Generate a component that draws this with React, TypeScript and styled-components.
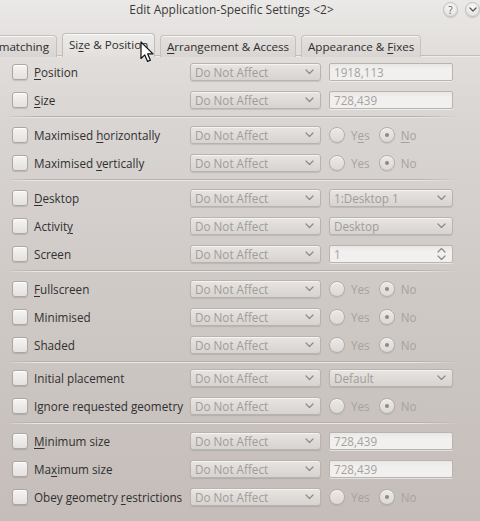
import React from 'react';
import styled, { createGlobalStyle } from 'styled-components';

const GlobalStyle = createGlobalStyle`
  html, body { margin: 0; padding: 0; }
  body {
    font-family: "Open Sans", "Noto Sans", sans-serif;
    font-size: 11.5px;
    color: #2f2f2f;
    -webkit-font-smoothing: antialiased;
  }
`;

const Window = styled.div`
  position: relative;
  width: 480px;
  height: 521px;
  overflow: hidden;
  background: linear-gradient(180deg, #ebe9e7 0px, #e2dfdd 45px, #d9d5d2 120px, #cfc9c6 300px, #c4bdb9 521px);
`;

const TitleBar = styled.div`
  display: grid;
  grid-template-columns: 1fr auto;
  height: 33px;
`;

const Title = styled.div`
  padding-left: 20px;
  text-align: center;
  line-height: 20px;
  font-size: 12px;
  color: #3a3a3a;
  white-space: nowrap;
`;

const TitleButtons = styled.div`
  display: flex;
  gap: 7px;
  padding-top: 2px;
`;

const TitleButton = styled.div`
  width: 15px;
  height: 15px;
  border-radius: 50%;
  box-sizing: border-box;
  border: 1px solid #c4c0bc;
  background: radial-gradient(circle at 50% 35%, #fbfbfa 0%, #e9e7e5 60%, #d9d6d3 100%);
  box-shadow: 0 1px 1px rgba(0, 0, 0, 0.15);
  display: flex;
  align-items: center;
  justify-content: center;
  font-size: 10px;
  line-height: 1;
  color: #555;
`;

const TabBar = styled.div`
  position: relative;
  display: flex;
  align-items: flex-end;
  gap: 5px;
  height: 24px;
  &::after {
    content: '';
    position: absolute;
    left: 0;
    right: 0;
    bottom: 0;
    height: 2px;
    background: linear-gradient(180deg, #c2bdb9 0 1px, #eeecea 1px 2px);
    z-index: 0;
  }
`;

const Tab = styled.div<{ $w: number; $active?: boolean; $cut?: boolean }>`
  position: relative;
  z-index: ${(p) => (p.$active ? 2 : 1)};
  box-sizing: border-box;
  width: ${(p) => p.$w}px;
  height: ${(p) => (p.$active ? 24 : 22)}px;
  padding: ${(p) => (p.$cut ? '0 7px 0 0' : '0 6px')};
  display: flex;
  align-items: center;
  justify-content: ${(p) => (p.$cut ? 'flex-end' : 'flex-start')};
  border: 1px solid ${(p) => (p.$active ? '#c1bcb8' : '#c6c1bd')};
  border-bottom: none;
  border-left-width: ${(p) => (p.$cut ? 0 : 1)}px;
  border-radius: ${(p) => (p.$cut ? '0 4px 0 0' : '4px 4px 0 0')};
  background: ${(p) =>
    p.$active
      ? 'linear-gradient(180deg, #eeecea 0%, #e2dfdc 100%)'
      : 'linear-gradient(180deg, #e3e0de 0%, #d9d5d2 100%)'};
  box-shadow: inset 0 1px 0 rgba(255, 255, 255, 0.7);
  color: #2e2e2e;
  font-size: 11.6px;
  white-space: nowrap;
  padding-bottom: ${(p) => (p.$active ? 3 : 1)}px;
`;

const Panel = styled.div`
  padding-top: 1px;
`;

const Row = styled.div`
  display: flex;
  align-items: center;
  height: 28px;
  padding-left: 12px;
`;

const CheckBox = styled.span`
  flex: none;
  box-sizing: border-box;
  width: 16px;
  height: 16px;
  margin-right: 6px;
  border: 1px solid #aca7a3;
  border-radius: 3px;
  background: linear-gradient(180deg, #f5f4f3 0%, #e4e1df 100%);
  box-shadow: 0 1px 1px rgba(0, 0, 0, 0.12), inset 0 1px 0 #fff;
`;

const Label = styled.span`
  flex: none;
  width: 156px;
  color: #303030;
  font-size: 11.7px;
  white-space: nowrap;
`;

const Mnemonic = styled.u`
  text-decoration: underline;
  text-underline-offset: 2px;
`;

const Combo = styled.div<{ $w: number }>`
  flex: none;
  box-sizing: border-box;
  width: ${(p) => p.$w}px;
  height: 18px;
  padding: 0 6px 0 4px;
  display: flex;
  align-items: center;
  justify-content: space-between;
  border: 1px solid #b8b3af;
  border-radius: 3px;
  background: linear-gradient(180deg, #e7e4e2 0%, #d7d3d0 100%);
  box-shadow: 0 1px 1px rgba(0, 0, 0, 0.1), inset 0 1px 0 rgba(255, 255, 255, 0.6);
  color: #a19c98;
  font-size: 11.7px;
  white-space: nowrap;
`;

const Value = styled.div`
  flex: none;
  margin-left: 8px;
  display: flex;
  align-items: center;
`;

const LineEdit = styled.div`
  box-sizing: border-box;
  width: 124px;
  height: 18px;
  padding: 0 6px 0 4px;
  display: flex;
  align-items: center;
  justify-content: space-between;
  border: 1px solid #b9b4b0;
  border-radius: 2px;
  background: linear-gradient(180deg, #e9e8e6 0%, #f1f0ef 35%, #f1f0ef 100%);
  box-shadow: 0 1px 0 rgba(255, 255, 255, 0.5);
  color: #a6a29e;
  font-size: 11.7px;
`;

const RadioOption = styled.span`
  display: flex;
  align-items: center;
  margin-right: 9px;
  color: #a7a29e;
  font-size: 11.7px;
`;

const RadioCircle = styled.span<{ $checked?: boolean }>`
  position: relative;
  box-sizing: border-box;
  width: 16px;
  height: 16px;
  margin-right: 6px;
  border-radius: 50%;
  border: 1px solid #b3aeaa;
  background: linear-gradient(180deg, #ebe9e7 0%, #dcd8d5 100%);
  box-shadow: 0 1px 1px rgba(0, 0, 0, 0.08), inset 0 1px 0 rgba(255, 255, 255, 0.7);
  &::after {
    content: '';
    display: ${(p) => (p.$checked ? 'block' : 'none')};
    position: absolute;
    left: 5px;
    top: 5px;
    width: 4px;
    height: 4px;
    border-radius: 50%;
    background: #8e8985;
  }
`;

const Separator = styled.div<{ $tight?: boolean }>`
  position: relative;
  height: ${(p) => (p.$tight ? 4.5 : 7)}px;
  margin: 0 20px 0 10px;
  &::before {
    content: '';
    position: absolute;
    left: 0;
    right: 0;
    top: 2px;
    height: 1px;
    background: linear-gradient(90deg, rgba(178, 171, 167, 0.2) 0%, #b5afab 6%, #b5afab 90%, rgba(178, 171, 167, 0) 100%);
  }
  &::after {
    content: '';
    position: absolute;
    left: 0;
    right: 0;
    top: 3px;
    height: 1px;
    background: linear-gradient(90deg, rgba(240, 238, 236, 0.2) 0%, #ebe8e6 6%, #ebe8e6 90%, rgba(240, 238, 236, 0) 100%);
  }
`;

const Cursor = styled.svg`
  position: absolute;
  z-index: 10;
  left: 140px;
  top: 41px;
`;

const Chevron = () => (
  <svg width="9" height="6" viewBox="0 0 9 6">
    <path d="M1 1 L4.5 4.5 L8 1" fill="none" stroke="#8e8985" strokeWidth="1.2" strokeLinecap="round" strokeLinejoin="round" />
  </svg>
);

const SpinArrows = () => (
  <svg width="9" height="14" viewBox="0 0 9 14">
    <path d="M1 5 L4.5 1.5 L8 5" fill="none" stroke="#8e8985" strokeWidth="1.2" strokeLinecap="round" strokeLinejoin="round" />
    <path d="M1 9 L4.5 12.5 L8 9" fill="none" stroke="#8e8985" strokeWidth="1.2" strokeLinecap="round" strokeLinejoin="round" />
  </svg>
);

/* "_" marks the mnemonic (underlined) letter; wrapped in a span so spaces survive inside flex boxes */
const Text = ({ s }: { s: string }) => {
  const i = s.indexOf('_');
  if (i < 0) return <span>{s}</span>;
  return (
    <span>
      {s.slice(0, i)}
      <Mnemonic>{s[i + 1]}</Mnemonic>
      {s.slice(i + 2)}
    </span>
  );
};

type Kind =
  | { type: 'edit'; text: string }
  | { type: 'spin'; text: string }
  | { type: 'combo'; text: string }
  | { type: 'radio'; yes?: string; no?: string };

type RowDef = { label: string; value: Kind };

const groups: RowDef[][] = [
  [
    { label: '_Position', value: { type: 'edit', text: '1918,113' } },
    { label: '_Size', value: { type: 'edit', text: '728,439' } },
  ],
  [
    { label: 'Maximised _horizontally', value: { type: 'radio', yes: 'Y_es', no: '_No' } },
    { label: 'Maximised _vertically', value: { type: 'radio' } },
  ],
  [
    { label: '_Desktop', value: { type: 'combo', text: '1:Desktop 1' } },
    { label: 'Activit_y', value: { type: 'combo', text: 'Desktop' } },
    { label: 'Screen', value: { type: 'spin', text: '1' } },
  ],
  [
    { label: '_Fullscreen', value: { type: 'radio' } },
    { label: 'Minimised', value: { type: 'radio' } },
    { label: 'Shaded', value: { type: 'radio' } },
  ],
  [
    { label: 'Initial placement', value: { type: 'combo', text: 'Default' } },
    { label: 'Ignore requested _geometry', value: { type: 'radio' } },
  ],
  [
    { label: '_Minimum size', value: { type: 'edit', text: '728,439' } },
    { label: 'Ma_ximum size', value: { type: 'edit', text: '728,439' } },
    { label: 'Obey geometry _restrictions', value: { type: 'radio' } },
  ],
];

const ValueCell = ({ v }: { v: Kind }) => {
  switch (v.type) {
    case 'edit':
      return <LineEdit>{v.text}</LineEdit>;
    case 'spin':
      return (
        <LineEdit>
          {v.text}
          <SpinArrows />
        </LineEdit>
      );
    case 'combo':
      return (
        <Combo $w={124}>
          {v.text}
          <Chevron />
        </Combo>
      );
    case 'radio':
      return (
        <>
          <RadioOption>
            <RadioCircle />
            <Text s={v.yes ?? 'Yes'} />
          </RadioOption>
          <RadioOption>
            <RadioCircle $checked />
            <Text s={v.no ?? 'No'} />
          </RadioOption>
        </>
      );
  }
};

export default function App() {
  return (
    <>
      <GlobalStyle />
      <Window>
        <TitleBar>
          <Title>Edit Application-Specific Settings &lt;2&gt;</Title>
          <TitleButtons>
            <TitleButton>?</TitleButton>
            <TitleButton>
              <svg width="8" height="5" viewBox="0 0 8 5">
                <path d="M1 1 L4 4 L7 1" fill="none" stroke="#555" strokeWidth="1.3" strokeLinecap="round" strokeLinejoin="round" />
              </svg>
            </TitleButton>
          </TitleButtons>
        </TitleBar>
        <TabBar>
          <Tab $w={57} $cut>matching</Tab>
          <Tab $w={93} $active>
            <Text s="Si_ze & Position" />
          </Tab>
          <Tab $w={136}>
            <Text s="_Arrangement & Access" />
          </Tab>
          <Tab $w={120}>
            <Text s="Appearance & _Fixes" />
          </Tab>
        </TabBar>
        <Panel>
          {groups.map((g, gi) => (
            <React.Fragment key={gi}>
              {gi > 0 && <Separator $tight={gi === 4} />}
              {g.map((r) => (
                <Row key={r.label}>
                  <CheckBox />
                  <Label>
                    <Text s={r.label} />
                  </Label>
                  <Combo $w={131}>
                    Do Not Affect
                    <Chevron />
                  </Combo>
                  <Value>
                    <ValueCell v={r.value} />
                  </Value>
                </Row>
              ))}
            </React.Fragment>
          ))}
        </Panel>
        <Cursor width="15" height="23" viewBox="0 0 15 23">
          <path d="M1 1 L1 17.5 L4.8 13.9 L7.6 20.4 L10.4 19.2 L7.7 12.9 L13 12.9 Z" fill="#fff" stroke="#111" strokeWidth="1.2" strokeLinejoin="round" />
        </Cursor>
      </Window>
    </>
  );
}
